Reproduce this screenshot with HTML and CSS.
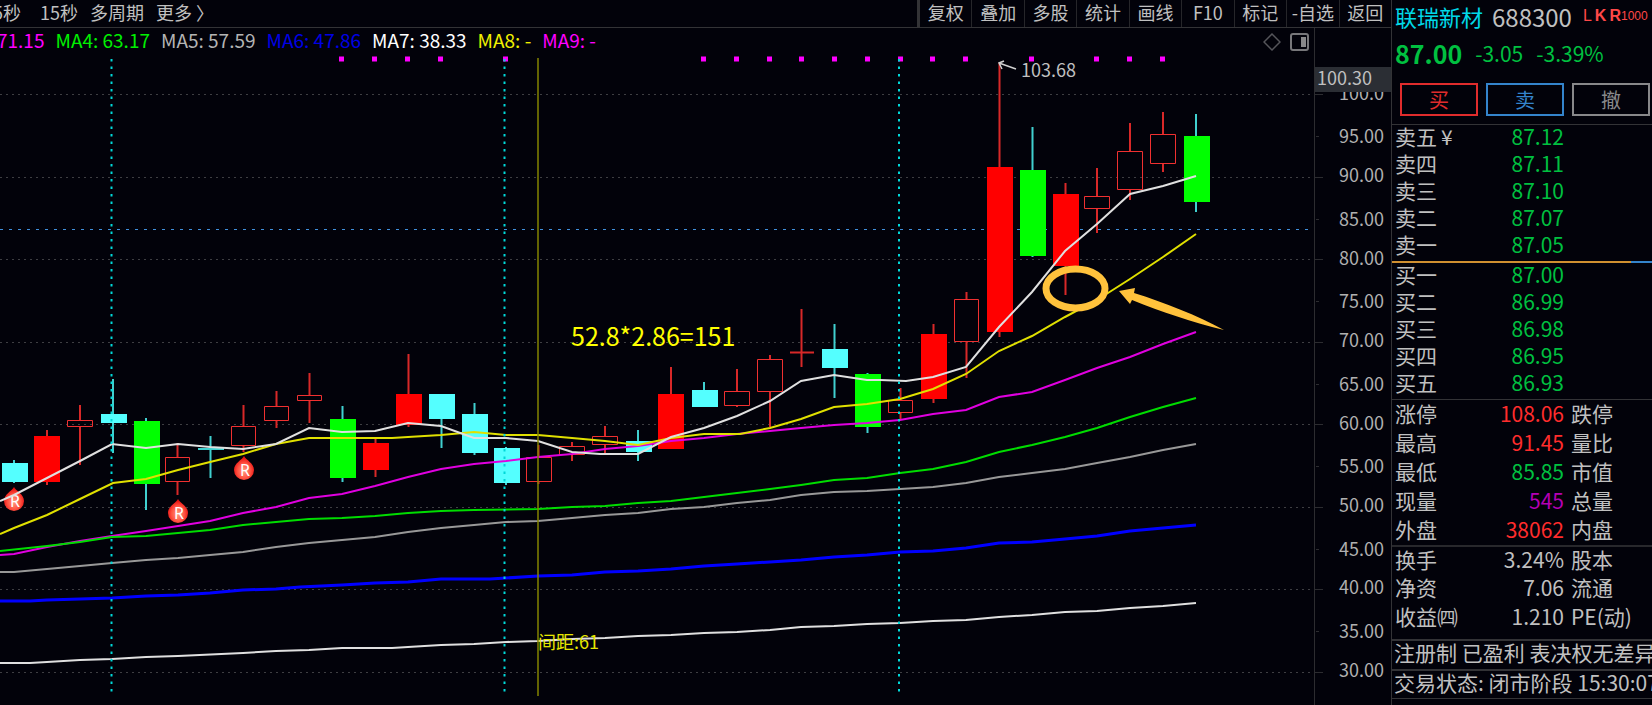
FILE: index.html
```
<!DOCTYPE html>
<html lang="zh-CN">
<head>
    <meta charset="UTF-8">
    <meta name="viewport" content="width=device-width, initial-scale=1.0">
    <title>联瑞新材 688300</title>
    <link rel="stylesheet" href="styles.css">
</head>
<body>
    <main class="main">
        <nav class="topbar">
            <div class="periods">
                <button>5秒</button>
                <button class="wide">15秒</button>
                <button>多周期</button>
                <button>更多 &#x232A;</button>
            </div>
            <div class="tools">
                <button>复权</button>
                <button>叠加</button>
                <button>多股</button>
                <button>统计</button>
                <button>画线</button>
                <button>F10</button>
                <button>标记</button>
                <button>-自选</button>
                <button>返回</button>
            </div>
        </nav>

        <div class="legend">
            <div class="averages">
                <span class="magenta">71.15</span>
                <span class="lime">MA4: 63.17</span>
                <span class="gray">MA5: 57.59</span>
                <span class="blue">MA6: 47.86</span>
                <span class="white">MA7: 38.33</span>
                <span class="yellow">MA8: -</span>
                <span class="magenta">MA9: -</span>
            </div>
            <button class="icon" aria-label="标记点">
                <svg width="18" height="18" viewBox="0 0 18 18"><path d="M9 1 L17 9 L9 17 L1 9 Z" fill="none" stroke="#55555a" stroke-width="1.5"/></svg>
            </button>
            <button class="icon" aria-label="侧栏">
                <svg width="20" height="18" viewBox="0 0 20 18"><rect x="1" y="1" width="17" height="16" rx="2" fill="none" stroke="#77777a" stroke-width="2"/><rect x="11" y="4" width="5" height="10" fill="#88888a"/></svg>
            </button>
            <div class="axis-top"></div>
        </div>

        <svg class="chart" viewBox="0 56 1391 649" preserveAspectRatio="xMinYMin meet">
            <!-- grid -->
            <path class="grid" d="M0 94.5H1314M0 177.5H1314M0 259.5H1314M0 342.5H1314M0 424.5H1314M0 507.5H1314M0 589.5H1314M0 672.5H1314"/>
            <path class="last-price" d="M0 229.5H1308"/>
            <path class="axis-line" d="M1314.500 56V705M1314 94.5H1323M1314 177.5H1323M1314 259.5H1323M1314 342.5H1323M1314 424.5H1323M1314 507.5H1323M1314 589.5H1323M1314 672.5H1323M1316 136.500H1319M1316 219.500H1319M1316 301.500H1319M1316 384.500H1319M1316 466.500H1319M1316 549.500H1319M1316 631.500H1319"/>

            <!-- signal dots -->
            <path class="dots" d="M339 59h5M372 59h5M405 59h5M438 59h5M503 59h5M701 59h5M734 59h5M767 59h5M799 59h5M832 59h5M865 59h5M898 59h5M930 59h5M963 59h5M1029 59h5M1094 59h5M1127 59h5M1160 59h5"/>

            <!-- candles: wicks first, then bodies -->
            <path class="wick-cyan" d="M14 460V483M113 379V453M146 418V510M210.500 436V478M198 449H224M342.500 406V482M441.500 394V448M474.500 403V455M506 447V485M638 430V461M704 382V407M834.500 324V398M867.500 373V433M1032.500 127V257M1196 114V212"/>
            <path class="wick-red" d="M47 430V485M80 405V420M80 427V465M177.500 443V457M177.500 482V495M243.500 405V426M243.500 446V452M276.500 391V406M276.500 421V428M309.500 373V395M309.500 401V423M375.500 439V477M408.500 354V427M538.500 445V457M538.500 482V484M572 442V446M572 455V461M605 426V436M605 445V454M671 367V394M737 369V391M737 405V407M770 355V359M770 392V427M801.500 309V367M790 352.500H814M900.500 388V400M900.500 413V419M933.500 324V403M966.500 292V299M966.500 342V378M999.500 63V337M1065.500 183V295M1097 168V196M1097 209V233M1130 123V151M1130 190V200M1163 112V134M1163 164V172"/>
            <path class="fill-cyan" d="M2 463h26v19h-26zM101 414h26v9h-26zM429 394h26v25h-26zM462 414h26v39h-26zM494 448h26v35h-26zM626 441h26v11h-26zM692 390h26v17h-26zM822 349h26v19h-26z"/>
            <path class="fill-green" d="M134 421h26v63h-26zM330 419h26v59h-26zM855 374h26v53h-26zM1020 170h26v86h-26zM1184 136h26v66h-26z"/>
            <path class="fill-red" d="M34 436h26v46h-26zM363 443h26v27h-26zM396 394h26v31h-26zM658 394h26v55h-26zM921 334h26v65h-26zM987 167h26v165h-26zM1053 194h26v72h-26z"/>
            <path class="hollow" d="M67.500 420.500h25v6h-25zM165.500 457.500h24v24h-24zM231.500 426.500h24v19h-24zM264.500 406.500h24v14h-24zM297.500 395.500h24v5h-24zM526.500 457.500h25v24h-25zM559.500 446.500h25v8h-25zM592.500 436.500h25v8h-25zM724.500 391.500h25v14h-25zM757.500 359.500h25v32h-25zM888.500 400.500h24v12h-24zM954.500 299.500h24v42h-24zM1084.500 196.500h25v12h-25zM1117.500 151.500h25v38h-25zM1150.500 134.500h25v29h-25z"/>

            <!-- R badges -->
            <defs>
                <radialGradient id="drop" cx="50%" cy="62%" r="55%">
                    <stop offset="0" stop-color="#ff9c80"/>
                    <stop offset="0.6" stop-color="#ff5040"/>
                    <stop offset="1" stop-color="#e81010"/>
                </radialGradient>
                <path id="pin" d="M0 -14 C2 -10 10 -7 10 0 A10 10 0 0 1 -10 0 C-10 -7 -2 -10 0 -14 Z" fill="url(#drop)"/>
            </defs>
            <use href="#pin" x="14" y="501"/>
            <use href="#pin" x="178" y="513"/>
            <use href="#pin" x="244" y="470"/>
            <text class="badge" x="15" y="507">R</text>
            <text class="badge" x="179" y="519">R</text>
            <text class="badge" x="245" y="476">R</text>

            <!-- moving averages -->
            <polyline class="line stroke-white" points="0,663 30,663 47,662 80,660 112,659 146,657 178,656 243,653 276,651 309,650 342,648 392,648 408,647 441,645 474,644 506,642 538,641 572,639 605,638 638,636 671,635 704,633 737,632 770,630 801,627 834,626 867,624 900,623 933,621 966,620 999,617 1032,615 1065,612 1097,611 1130,608 1163,606 1196,603"/>
            <polyline class="line stroke-blue" points="0,601 30,601 47,600 80,599 112,598 146,596 178,595 210,593 243,590 276,589 300,587 342,585 375,583 408,582 441,579 490,579 506,578 538,576 572,575 605,572 638,571 671,569 704,566 737,564 770,562 801,560 834,557 867,555 900,552 933,551 966,548 999,543 1032,542 1065,539 1097,536 1130,531 1163,528 1196,525"/>
            <polyline class="line stroke-gray" points="0,572 14,572 47,569 80,566 112,563 146,560 178,558 210,555 243,552 276,547 309,543 342,540 375,537 408,532 441,528 474,525 506,522 538,521 572,518 605,515 638,513 671,509 704,507 737,503 770,500 801,495 834,492 867,491 900,489 933,487 966,483 999,477 1032,473 1065,469 1097,463 1130,457 1163,450 1196,444"/>
            <polyline class="line stroke-magenta" points="0,555 14,554 47,547 80,541 112,536 146,531 178,526 210,521 243,513 276,507 309,498 342,494 375,486 408,477 441,469 474,464 506,461 538,457 572,454 605,449 638,446 671,441 704,438 737,434 770,431 801,428 834,425 867,423 900,420 933,414 966,410 999,397 1032,392 1065,380 1097,368 1130,357 1163,344 1196,332"/>
            <polyline class="line stroke-lime" points="0,551 47,546 80,542 112,537 146,536 178,533 210,530 243,525 276,522 309,519 342,518 375,516 408,513 441,511 474,510 538,509 572,507 605,506 638,503 671,501 704,497 737,493 770,489 801,485 834,480 867,478 900,473 933,469 966,462 999,452 1032,445 1065,437 1097,428 1130,417 1163,407 1196,398"/>
            <polyline class="line stroke-yellow" points="0,534 14,528 47,515 80,499 113,483 146,479 178,470 210,462 243,454 276,444 309,438 392,438 408,437 441,435 474,432 506,435 538,435 572,438 605,441 638,445 671,438 704,434 740,434 770,428 801,419 834,407 867,404 900,399 933,389 966,374 999,351 1032,336 1065,317 1097,300 1130,279 1163,257 1196,234"/>
            <polyline class="line stroke-white" points="0,501 14,495 47,478 80,461 112,444 146,448 178,444 210,447 243,449 276,444 309,428 342,432 375,431 408,423 441,426 474,438 506,438 538,441 572,452 600,454 638,454 671,437 704,428 737,416 770,401 801,381 834,375 867,380 880,380 906,381 933,377 966,367 999,327 1032,292 1065,251 1097,224 1130,194 1163,186 1196,176"/>

            <!-- month marks and cursor -->
            <path class="month" d="M111.500 59V693M504.500 59V693M899 59V693"/>
            <path class="cursor" d="M538 58V696"/>

            <!-- notes -->
            <path class="peak-arrow" d="M1016 69L999 63M1004 61L999 63L1002 69"/>
            <text class="note" x="1021" y="77">103.68</text>
            <text class="formula" x="571" y="346">52.8*2.86=151</text>
            <text class="gap" x="538" y="649">间距:61</text>
            <ellipse class="ring" cx="1075.500" cy="288.500" rx="29.500" ry="19.500"/>
            <path class="arrow" d="M1119 291L1135 288L1134 293C1166 303 1196 315 1224 330C1192 322 1162 312 1132 300L1130 304Z"/>

            <!-- price axis -->
            <g class="prices">
                <text x="1384" y="100">100.0</text>
                <text x="1384" y="143">95.00</text>
                <text x="1384" y="182">90.00</text>
                <text x="1384" y="226">85.00</text>
                <text x="1384" y="265">80.00</text>
                <text x="1384" y="308">75.00</text>
                <text x="1384" y="347">70.00</text>
                <text x="1384" y="391">65.00</text>
                <text x="1384" y="430">60.00</text>
                <text x="1384" y="473">55.00</text>
                <text x="1384" y="512">50.00</text>
                <text x="1384" y="556">45.00</text>
                <text x="1384" y="594">40.00</text>
                <text x="1384" y="638">35.00</text>
                <text x="1384" y="677">30.00</text>
            </g>
            <rect x="1315" y="67" width="76" height="25" fill="#2b2e34"/>
            <text class="note" x="1317" y="85">100.30</text>
        </svg>
    </main>

    <aside class="quote">
        <header class="stock">
            <span class="name">联瑞新材</span>
            <span class="code">688300</span>
            <span class="tags"><span>L</span><b>K</b><b>R</b><i>1000</i></span>
        </header>
        <div class="price">
            <b>87.00</b>
            <span>-3.05</span>
            <span>-3.39%</span>
        </div>
        <div class="orders">
            <button class="buy">买</button>
            <button class="sell">卖</button>
            <button class="cancel">撤</button>
        </div>

        <table class="book">
            <tr><th>卖五<span class="yen">¥</span></th><td>87.12</td><td></td></tr>
            <tr><th>卖四</th><td>87.11</td><td></td></tr>
            <tr><th>卖三</th><td>87.10</td><td></td></tr>
            <tr><th>卖二</th><td>87.07</td><td></td></tr>
            <tr><th>卖一</th><td>87.05</td><td></td></tr>
        </table>
        <div class="ratio"></div>
        <table class="book">
            <tr><th>买一</th><td>87.00</td><td></td></tr>
            <tr><th>买二</th><td>86.99</td><td></td></tr>
            <tr><th>买三</th><td>86.98</td><td></td></tr>
            <tr><th>买四</th><td>86.95</td><td></td></tr>
            <tr><th>买五</th><td>86.93</td><td></td></tr>
        </table>

        <table class="stats">
            <tr><th>涨停</th><td class="up">108.06</td><th>跌停</th></tr>
            <tr><th>最高</th><td class="up">91.45</td><th>量比</th></tr>
            <tr><th>最低</th><td class="down">85.85</td><th>市值</th></tr>
            <tr><th>现量</th><td class="volume">545</td><th>总量</th></tr>
            <tr><th>外盘</th><td class="up">38062</td><th>内盘</th></tr>
        </table>
        <table class="stats company">
            <tr><th>换手</th><td>3.24%</td><th>股本</th></tr>
            <tr><th>净资</th><td>7.06</td><th>流通</th></tr>
            <tr><th>收益㈣</th><td>1.210</td><th>PE(动)</th></tr>
        </table>
        <p class="info">注册制 已盈利 表决权无差异</p>
        <p class="info">交易状态: 闭市阶段 15:30:07</p>
    </aside>
</body>
</html>
```

FILE: styles.css
```
* {
    box-sizing: border-box;
}

body {
    margin: 0;
    height: 100vh;
    display: flex;
    overflow: hidden;
    background-color: #02020a;
    color: #c0c0c0;
    font-family: 'Noto Sans CJK SC', 'Noto Sans', sans-serif;
}

button {
    background: none;
    border: none;
    padding: 0;
    color: inherit;
    font-family: inherit;
    font-size: 18px;
    white-space: nowrap;
    cursor: pointer;
}

.main {
    flex: 1;
    min-width: 0;
    display: flex;
    flex-direction: column;
}

.topbar {
    height: 28px;
    display: flex;
    justify-content: space-between;
    border-bottom: 1px solid #333336;
}

.periods {
    display: flex;
    gap: 12px;
    margin-left: -7px;
}

.periods button, .tools button {
    padding-bottom: 4px;
    line-height: 22px;
}

.periods .wide {
    padding-left: 7px;
}

.tools {
    width: 474px;
    display: flex;
    border-left: 3px solid #333336;
}

.tools button {
    flex: 1;
    border-right: 1px solid #26262a;
}

.tools button:last-child {
    border-right: none;
}

.legend {
    height: 28px;
    display: flex;
    align-items: center;
    font-size: 19px;
    line-height: 24px;
}

.averages {
    flex: 1;
    display: flex;
    gap: 11px;
    margin-left: -3px;
    padding-bottom: 4px;
    white-space: nowrap;
}

.icon {
    height: 18px;
    line-height: 0;
    margin-right: 9px;
}

.icon svg {
    display: block;
}

.axis-top {
    width: 77px;
    height: 28px;
    margin-left: -5px;
    border-left: 1px solid #2c2c30;
}

.magenta { color: #f0f; }
.lime { color: #00f000; }
.gray { color: #b4b4b4; }
.blue { color: #0000e6; }
.white { color: #fff; }
.yellow { color: #f0f000; }

/* chart */
.chart {
    display: block;
    flex: 1;
    min-height: 0;
    width: 100%;
}

.grid {
    stroke: #3e3e42;
    stroke-dasharray: 2 4;
}

.last-price {
    stroke: #4090dc;
    stroke-dasharray: 3 6;
}

.axis-line {
    fill: none;
    stroke: #2c2c30;
}

.dots {
    stroke: #f0f;
    stroke-width: 5;
}

.wick-cyan {
    stroke: #40d0d0;
    stroke-width: 2;
}

.wick-red {
    stroke: #d82828;
    stroke-width: 2;
}

.fill-cyan { fill: #54ffff; }
.fill-green { fill: #0f0; }
.fill-red { fill: #f00; }

.hollow {
    fill: none;
    stroke: #f03030;
}

.badge {
    fill: #fff;
    font-family: 'Noto Sans', sans-serif;
    font-size: 16px;
    text-anchor: middle;
}

.line {
    fill: none;
    stroke-width: 2;
}

.stroke-white { stroke: #e0e0e0; }
.stroke-yellow { stroke: #e0e000; }
.stroke-magenta { stroke: #e000e0; }
.stroke-lime { stroke: #00dc00; }
.stroke-gray { stroke: #989898; }

.stroke-blue {
    stroke: #00f;
    stroke-width: 3;
}

.month {
    stroke: #00d8d8;
    stroke-width: 2;
    stroke-dasharray: 2.5 5;
}

.cursor {
    stroke: #858500;
    stroke-width: 1.5;
}

.peak-arrow {
    fill: none;
    stroke: #d0d0d0;
    stroke-width: 1.5;
}

.note {
    fill: #c0c0c0;
    font-size: 18px;
}

.formula {
    fill: #ff0;
    font-size: 25px;
}

.gap {
    fill: #e6e600;
    font-size: 18px;
}

.ring {
    fill: none;
    stroke: #ffc23c;
    stroke-width: 7;
}

.arrow {
    fill: #ffc23c;
}

.prices {
    fill: #b0b0b0;
    font-size: 18px;
    text-anchor: end;
}

/* quote panel */
.quote {
    width: 261px;
    flex: none;
    overflow: hidden;
    border-left: 1px solid #333336;
    font-size: 21px;
}

.stock {
    height: 36px;
    padding: 0 0 4px 3px;
    display: flex;
    align-items: center;
    white-space: nowrap;
}

.name {
    color: #00d8e8;
    font-size: 22px;
}

.code {
    margin-left: 9px;
    font-size: 24px;
}

.tags {
    display: flex;
    align-items: center;
    gap: 3px;
    margin-left: 11px;
    color: #ff4848;
    font-family: 'Liberation Sans', sans-serif;
    font-size: 16px;
    line-height: 16px;
}

.tags i {
    margin-left: -3px;
    font-family: 'Liberation Sans Narrow', 'Liberation Sans', sans-serif;
    font-size: 12px;
    font-style: normal;
}

.price {
    height: 38px;
    padding: 0 0 4px 3px;
    display: flex;
    align-items: center;
    gap: 13px;
    color: #00c040;
}

.price b {
    font-size: 25px;
}

.orders {
    display: flex;
    gap: 8px;
    padding: 9px 2px 8px 8px;
    border-bottom: 1px solid #333336;
}

.orders button {
    flex: 1;
    height: 33px;
    border: 2px solid;
    font-size: 20px;
    line-height: 26px;
}

.buy { color: #e02c2c; }
.sell { color: #3484cc; }
.cancel { color: #88888a; }

table {
    width: 100%;
    border-collapse: collapse;
    table-layout: fixed;
}

th, td {
    padding: 0;
    height: 27px;
    line-height: 23px;
    font-weight: normal;
    text-align: left;
    vertical-align: top;
    white-space: nowrap;
}

th:first-child {
    width: 88px;
    padding-left: 3px;
}

td:nth-child(2) {
    width: 84px;
    text-align: right;
}

th:last-child {
    padding-left: 7px;
}

.book {
    margin-bottom: 1px;
}

.book td {
    color: #00c040;
}

.yen {
    margin-left: 4px;
}

.ratio {
    height: 2px;
    background: linear-gradient(to right, #d09030 92%, #3484cc 92%);
}

.stats {
    border-top: 1px solid #333336;
}

.stats th, .stats td {
    height: 29px;
    line-height: 26px;
}

.up { color: #ff2c2c; }
.down { color: #00c040; }
.volume { color: #b400b4; }

.company {
    border-top: 2px solid #28282c;
    margin-bottom: 6px;
}

.company th, .company td {
    line-height: 25px;
}

.info {
    margin: 0;
    padding-left: 2px;
    height: 30px;
    border-top: 2px solid #333336;
    line-height: 22px;
    white-space: nowrap;
}

.info:last-child {
    border-bottom: 1px solid #333336;
}
```
